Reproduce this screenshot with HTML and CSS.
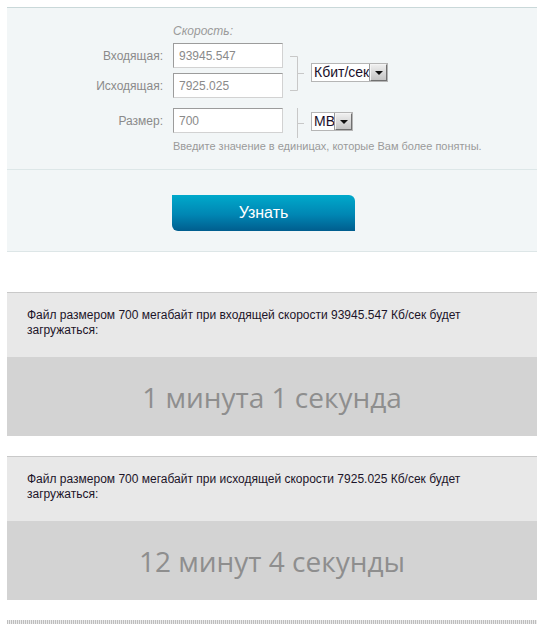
FILE: index.html
```html
<!DOCTYPE html>
<html lang="ru">
<head>
<meta charset="utf-8">
<title>Калькулятор времени загрузки</title>
<link rel="stylesheet" href="styles.css">
</head>
<body>
<div class="page">
  <div class="panel">
    <div class="form">
      <div class="caption">Скорость:</div>
      <div class="group">
        <div class="rows">
          <div class="row"><label class="label">Входящая:</label><input class="field" type="text" value="93945.547"></div>
          <div class="row"><label class="label">Исходящая:</label><input class="field" type="text" value="7925.025"></div>
        </div>
        <svg class="bracket b1" width="14" height="55" viewBox="0 0 14 55"><path d="M0 13.5H7.5V47.5H0M7.5 30.5H14" fill="none" stroke="#c8c8c8" stroke-width="1"/></svg>
        <div class="select s1"><span class="sel-text">Кбит/сек</span><span class="sel-btn"><span class="tri"></span></span></div>
      </div>
      <div class="group g2">
        <div class="rows">
          <div class="row"><label class="label">Размер:</label><input class="field" type="text" value="700"></div>
        </div>
        <svg class="bracket b2" width="14" height="30" viewBox="0 0 14 30"><path d="M7.5 0V30M7.5 15.5H14" fill="none" stroke="#c8c8c8" stroke-width="1"/></svg>
        <div class="select s2"><span class="sel-text">MB</span><span class="sel-btn"><span class="tri"></span></span></div>
      </div>
      <div class="hint">Введите значение в единицах, которые Вам более понятны.</div>
    </div>
    <div class="actions">
      <button class="btn" type="button">Узнать</button>
    </div>
  </div>

  <div class="result">
    <div class="result-text">Файл размером 700 мегабайт при входящей скорости 93945.547 Кб/сек будет загружаться:</div>
    <div class="result-value">1 минута 1 секунда</div>
  </div>

  <div class="result r2">
    <div class="result-text">Файл размером 700 мегабайт при исходящей скорости 7925.025 Кб/сек будет загружаться:</div>
    <div class="result-value">12 минут 4 секунды</div>
  </div>

  <div class="hatch"></div>
</div>
</body>
</html>
```
FILE: styles.css
```css
* { box-sizing: border-box; }
html, body { margin: 0; padding: 0; background: #fff; }
body { font-family: "Liberation Sans", Arial, sans-serif; font-size: 12px; }
.page { padding: 7px 7px 0 7px; width: 544px; }

.panel {
  background: #f2f6f7;
  border-top: 1px solid #c9d8d9;
  border-bottom: 1px solid #dde6e7;
}
.form {
  padding: 16px 0 16px 0;
  border-bottom: 1px solid #dde7e8;
}
.caption {
  margin-left: 166px;
  font-style: italic;
  color: #9a9a9a;
  line-height: 15px;
  height: 15px;
  margin-bottom: 4px;
}
.group { display: flex; align-items: flex-start; }
.g2 { margin-top: 10px; height: 25px; }
.rows { display: flex; flex-direction: column; gap: 5px; }
.row { display: flex; align-items: center; height: 25px; }
.label {
  width: 156px;
  margin-right: 10px;
  text-align: right;
  color: #8a8a8a;
  font-size: 12px;
}
.field {
  width: 110px;
  height: 25px;
  margin: 0;
  padding: 0 5px;
  border: 1px solid;
  border-color: #9c9c9c #d2d2d2 #d2d2d2 #9c9c9c;
  background: #fff;
  font-family: "Liberation Sans", Arial, sans-serif;
  font-size: 12px;
  color: #8a8a8a;
  outline: none;
}
.bracket { margin-left: 7px; flex: none; display: block; overflow: visible; }
.select {
  margin-left: 7px;
  display: flex;
  align-items: stretch;
  height: 19px;
  border: 1px solid #b5b5b5;
  background: #fff;
  overflow: hidden;
  flex: none;
}
.s1 { margin-top: 20px; width: 77px; }
.s2 { margin-top: 4px; width: 42px; }
.sel-text {
  flex: 1;
  overflow: hidden;
  white-space: nowrap;
  padding-left: 2px;
  font-size: 14px;
  line-height: 17px;
  color: #1a0f2a;
}
.sel-btn {
  flex: none;
  width: 17px;
  display: flex;
  align-items: center;
  justify-content: center;
  background: linear-gradient(#eeeeee, #c4c4c4);
  border: 1px solid;
  border-color: #f4f4f4 #707070 #707070 #f4f4f4;
  box-shadow: -1px 0 0 #9a9a9a;
}
.tri {
  width: 0; height: 0;
  border-left: 4px solid transparent;
  border-right: 4px solid transparent;
  border-top: 4px solid #111;
}
.hint {
  margin: 6px 0 0 166px;
  font-size: 11px;
  line-height: 14px;
  color: #9a9a9a;
}

.actions { padding: 25px 0 20px 165px; }
.btn {
  display: block;
  width: 183px;
  height: 36px;
  margin: 0;
  padding: 0;
  border: none;
  border-radius: 0 6px 0 6px;
  background: linear-gradient(#00a9cb, #0086b3 55%, #005d8e);
  color: #fff;
  font-family: "Liberation Sans", Arial, sans-serif;
  font-size: 16px;
  line-height: 36px;
  text-align: center;
}

.result {
  margin-top: 40px;
  border-top: 1px solid #c9c9c9;
  background: #d3d3d3;
}
.r2 { margin-top: 20px; }
.result-text {
  background: #e8e8e8;
  padding: 15px 20px 19px 20px;
  line-height: 15px;
  font-size: 12px;
  color: #1c1428;
}
.result-value {
  height: 79px;
  display: flex;
  align-items: center;
  justify-content: center;
  font-family: "Open Sans", "DejaVu Sans", sans-serif;
  font-size: 28px;
  color: #8e8e8e;
}
.hatch {
  margin-top: 20px;
  height: 4px;
  background: repeating-linear-gradient(90deg, #bdbdbd 0 1px, #ececec 1px 2px);
}
```
